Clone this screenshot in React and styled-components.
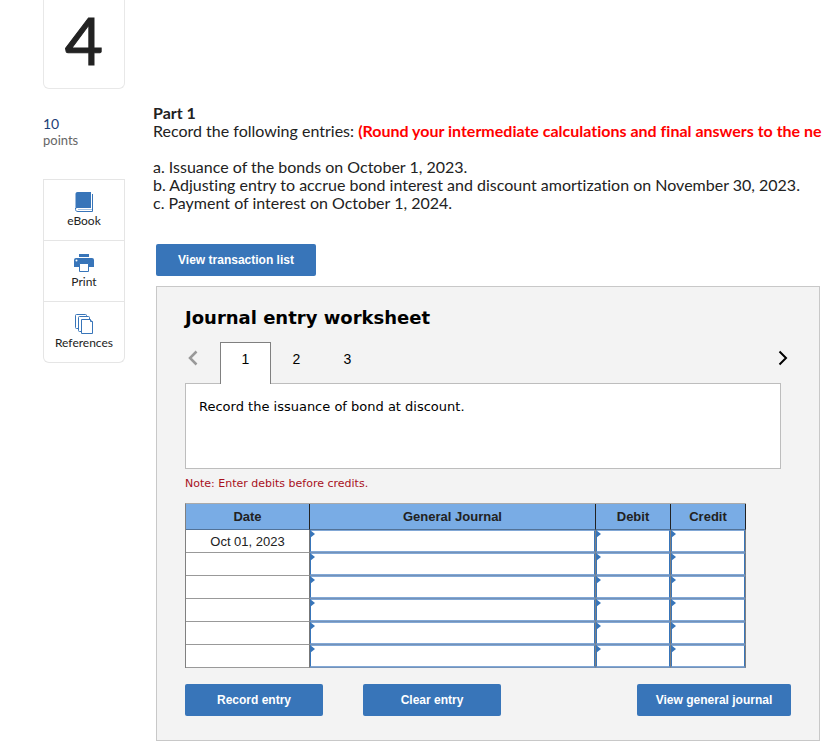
import { useState } from "react";
import styled, { createGlobalStyle } from "styled-components";

const GlobalStyle = createGlobalStyle`
  * {
    box-sizing: border-box;
  }
  body {
    margin: 0;
    background: #fff;
    color: #222;
    font-family: Lato, sans-serif;
    font-variant-ligatures: none;
    overflow-x: hidden;
  }
`;

const Page = styled.div`
  display: flex;
  align-items: flex-start;
  padding: 0 11px 6px 43px;
`;

const Sidebar = styled.aside`
  flex: 0 0 82px;
`;

const QuestionNumber = styled.h1`
  display: flex;
  align-items: center;
  justify-content: center;
  height: 89px;
  margin: 0;
  padding-bottom: 8px;
  border: 1px solid #e8e8e8;
  border-top: 0;
  border-radius: 0 0 6px 6px;
  font-size: 66px;
  font-weight: 400;
  line-height: 80px;
  -webkit-text-stroke: 1px #222;
  stroke-linejoin: round;
`;

const Points = styled.div`
  display: flex;
  flex-direction: column;
  margin: 27px 0 30px;
  color: #666;
  font-size: 13px;
  line-height: 17px;
`;

const PointsValue = styled.span`
  color: #1c4078;
  font-size: 14px;
  line-height: 16px;
`;

const Tools = styled.nav`
  border: 1px solid #e5e5e5;
  border-top: 0;
  border-radius: 0 0 6px 6px;
`;

const Tool = styled.a`
  display: flex;
  flex-direction: column;
  align-items: center;
  height: 61px;
  padding-top: 12px;
  border-top: 1px solid #e5e5e5;
  color: #222;
  font-size: 12px;
  line-height: 18px;
  text-decoration: none;
`;

const Main = styled.main`
  flex: 1;
  min-width: 0;
  padding: 104px 0 0 28px;
`;

const Prompt = styled.section`
  margin-bottom: 32px;
  font-size: 16px;
  line-height: 18px;
  white-space: nowrap;

  p {
    margin: 0;
  }
`;

const Warning = styled.strong`
  color: #f00;
`;

const PartTitle = styled.h2`
  margin: 0;
  font-size: 16px;
  line-height: 18px;
`;

const Entries = styled.div`
  margin-top: 18px;
`;

const Button = styled.button`
  width: ${(props) => props.$width}px;
  height: 32px;
  padding: 0;
  border: 0;
  border-radius: 2px;
  background: #3875b9;
  color: #fff;
  font-family: "Liberation Sans", Arial, sans-serif;
  font-size: 12px;
  font-weight: bold;
  cursor: pointer;
`;

const Worksheet = styled.div`
  margin-left: 3px;
`;

const Panel = styled.section`
  margin-top: 10px;
  padding: 20px 28px 24px;
  border: 1px solid #c8c8c8;
  background: #f3f3f3;
  color: #000;
  font-family: "DejaVu Sans", Verdana, sans-serif;
`;

const PanelTitle = styled.h3`
  margin: 0 0 13px;
  font-size: 18px;
  line-height: 22px;
`;

const TabBar = styled.div`
  display: flex;
  align-items: center;
  height: 41px;
`;

const TabList = styled.div`
  display: flex;
  flex: 1;
  height: 42px;
`;

const Tab = styled.button`
  position: relative;
  z-index: 1;
  width: 51px;
  height: 42px;
  padding: 0 0 8px;
  border: 1px solid ${(props) => (props.$active ? "#808080" : "transparent")};
  border-bottom: 0;
  background: ${(props) => (props.$active ? "#fff" : "transparent")};
  color: #000;
  font-family: "Liberation Sans", Arial, sans-serif;
  font-size: 14px;
`;

const Arrow = styled.button`
  display: flex;
  align-items: center;
  justify-content: ${(props) => (props.disabled ? "flex-start" : "flex-end")};
  width: 35px;
  height: 31px;
  margin-bottom: 9px;
  padding: 0 3px;
  border: 0;
  background: none;
  color: ${(props) => (props.disabled ? "#999" : "#000")};
`;

const Description = styled.div`
  height: 86px;
  margin-right: 10px;
  padding: 13px;
  border: 1px solid #bdbdbd;
  background: #fff;
  font-size: 13px;
  line-height: 20px;
`;

const Note = styled.p`
  margin: 6px 0 10px;
  color: #a8101c;
  font-size: 11px;
  line-height: 18px;
`;

const TableWrap = styled.div`
  margin-right: 45px;
`;

const JournalTable = styled.table`
  width: 100%;
  table-layout: fixed;
  border-collapse: separate;
  border-spacing: 0;
  border-top: 1px solid #aaa;
  border-left: 1px solid #808080;
  background: #fff;
  color: #222;
  font-family: "Liberation Sans", Arial, sans-serif;
  font-size: 13px;
`;

const Col = styled.col`
  width: ${(props) => (props.$width ? `${props.$width}px` : "auto")};
`;

const HeadCell = styled.th`
  height: 26px;
  padding: 0;
  border-right: 1px solid #222;
  border-bottom: 1px solid #527297;
  background: #79ace5;
`;

const DateCell = styled.td`
  height: 23px;
  padding: 0;
  border-right: 1px solid #777;
  border-bottom: 1px solid #999;
  text-align: center;
`;

const EntryCell = styled.td`
  position: relative;
  height: 23px;
  padding: 0;
  border-right: 1px solid #808080;
  border-bottom: 1px solid #7492b8;

  &::before {
    content: "";
    position: absolute;
    top: 0;
    left: 0;
    border: 4px solid transparent;
    border-left: 5px solid #3875b9;
    border-right: 0;
  }
`;

const EntryInput = styled.input`
  display: block;
  width: 100%;
  height: 22px;
  padding: 0 8px;
  border: 1px solid #3875b9;
  border-top-color: #82a8d6;
  border-bottom-color: #82a8d6;
  border-radius: 0;
  background: #fff;
  font: inherit;
  outline: 0;
`;

const Actions = styled.div`
  display: flex;
  gap: 40px;
  margin-top: 16px;

  button:last-child {
    margin-left: auto;
  }
`;

function BookIcon() {
  return (
    <svg width="20" height="20" viewBox="0 0 20 20" aria-hidden="true">
      <path d="M3.500 0H17v16H4c-1.200 0-2 .3-2.500 1V2c0-1.300.8-2 2-2z" fill="#3875b9" />
      <path
        d="M18.500 2v17.500H4c-1.700 0-2.500-.8-2.500-2V16"
        fill="none"
        stroke="#3875b9"
      />
      <path d="M4 17.500h14" stroke="#a9c4e2" />
    </svg>
  );
}

function PrintIcon() {
  return (
    <svg width="20" height="20" viewBox="0 0 20 20" aria-hidden="true">
      <path d="M5 1h10v3H5z" fill="#3875b9" />
      <path d="M2 5h16q2 0 2 2v7H0V7q0-2 2-2z" fill="#3875b9" />
      <circle cx="2.500" cy="7.500" r="1" fill="#fff" />
      <path d="M5.500 10.500h9v8h-9z" fill="#fff" stroke="#3875b9" />
    </svg>
  );
}

function ReferencesIcon() {
  return (
    <svg
      width="20"
      height="20"
      viewBox="0 0 20 20"
      fill="#fff"
      stroke="#3875b9"
      aria-hidden="true"
    >
      <rect x="1.500" y=".5" width="11" height="14" rx="1" />
      <rect x="4.500" y="2.500" width="11" height="15" rx="1" />
      <path d="M7.500 5.500h9l2 2v12h-11z" />
      <path d="M16.500 5.500v2h2" />
    </svg>
  );
}

function Chevron({ left }) {
  return (
    <svg width="10" height="16" viewBox="0 0 10 16" fill="none" aria-hidden="true">
      <path
        d={left ? "M8.500 1.500 2 8l6.500 6.500" : "M1.500 1.500 8 8l-6.500 6.500"}
        stroke="currentColor"
        strokeWidth={left ? 2.5 : 2}
      />
    </svg>
  );
}

const tools = [
  { label: "eBook", Icon: BookIcon },
  { label: "Print", Icon: PrintIcon },
  { label: "References", Icon: ReferencesIcon },
];

const rows = ["Oct 01, 2023", "", "", "", "", ""];
const fields = ["General Journal", "Debit", "Credit"];

export default function App() {
  const [tab, setTab] = useState(1);

  return (
    <>
      <GlobalStyle />
      <Page>
        <Sidebar>
          <QuestionNumber>4</QuestionNumber>
          <Points>
            <PointsValue>10</PointsValue>
            points
          </Points>
          <Tools>
            {tools.map(({ label, Icon }) => (
              <Tool key={label} href="#">
                <Icon />
                {label}
              </Tool>
            ))}
          </Tools>
        </Sidebar>
        <Main>
          <Prompt>
            <PartTitle>Part 1</PartTitle>
            <p>
              Record the following entries:{" "}
              <Warning>
                (Round your intermediate calculations and final answers to the ne
              </Warning>
            </p>
            <Entries>
              <p>a. Issuance of the bonds on October 1, 2023.</p>
              <p>
                b. Adjusting entry to accrue bond interest and discount
                amortization on November 30, 2023.
              </p>
              <p>c. Payment of interest on October 1, 2024.</p>
            </Entries>
          </Prompt>
          <Worksheet>
            <Button $width={160}>View transaction list</Button>
            <Panel>
              <PanelTitle>Journal entry worksheet</PanelTitle>
              <TabBar>
                <Arrow disabled aria-label="Previous entry">
                  <Chevron left />
                </Arrow>
                <TabList role="tablist">
                  {[1, 2, 3].map((n) => (
                    <Tab
                      key={n}
                      role="tab"
                      aria-selected={tab === n}
                      $active={tab === n}
                      onClick={() => setTab(n)}
                    >
                      {n}
                    </Tab>
                  ))}
                </TabList>
                <Arrow aria-label="Next entry">
                  <Chevron />
                </Arrow>
              </TabBar>
              <Description>Record the issuance of bond at discount.</Description>
              <Note>Note: Enter debits before credits.</Note>
              <TableWrap>
                <JournalTable>
                  <colgroup>
                    <Col $width={124} />
                    <Col />
                    <Col $width={75} />
                    <Col $width={75} />
                  </colgroup>
                  <thead>
                    <tr>
                      <HeadCell>Date</HeadCell>
                      {fields.map((field) => (
                        <HeadCell key={field}>{field}</HeadCell>
                      ))}
                    </tr>
                  </thead>
                  <tbody>
                    {rows.map((date, i) => (
                      <tr key={i}>
                        <DateCell>{date}</DateCell>
                        {fields.map((field) => (
                          <EntryCell key={field}>
                            <EntryInput aria-label={`${field}, row ${i + 1}`} />
                          </EntryCell>
                        ))}
                      </tr>
                    ))}
                  </tbody>
                </JournalTable>
              </TableWrap>
              <Actions>
                <Button $width={138}>Record entry</Button>
                <Button $width={138}>Clear entry</Button>
                <Button $width={154}>View general journal</Button>
              </Actions>
            </Panel>
          </Worksheet>
        </Main>
      </Page>
    </>
  );
}
